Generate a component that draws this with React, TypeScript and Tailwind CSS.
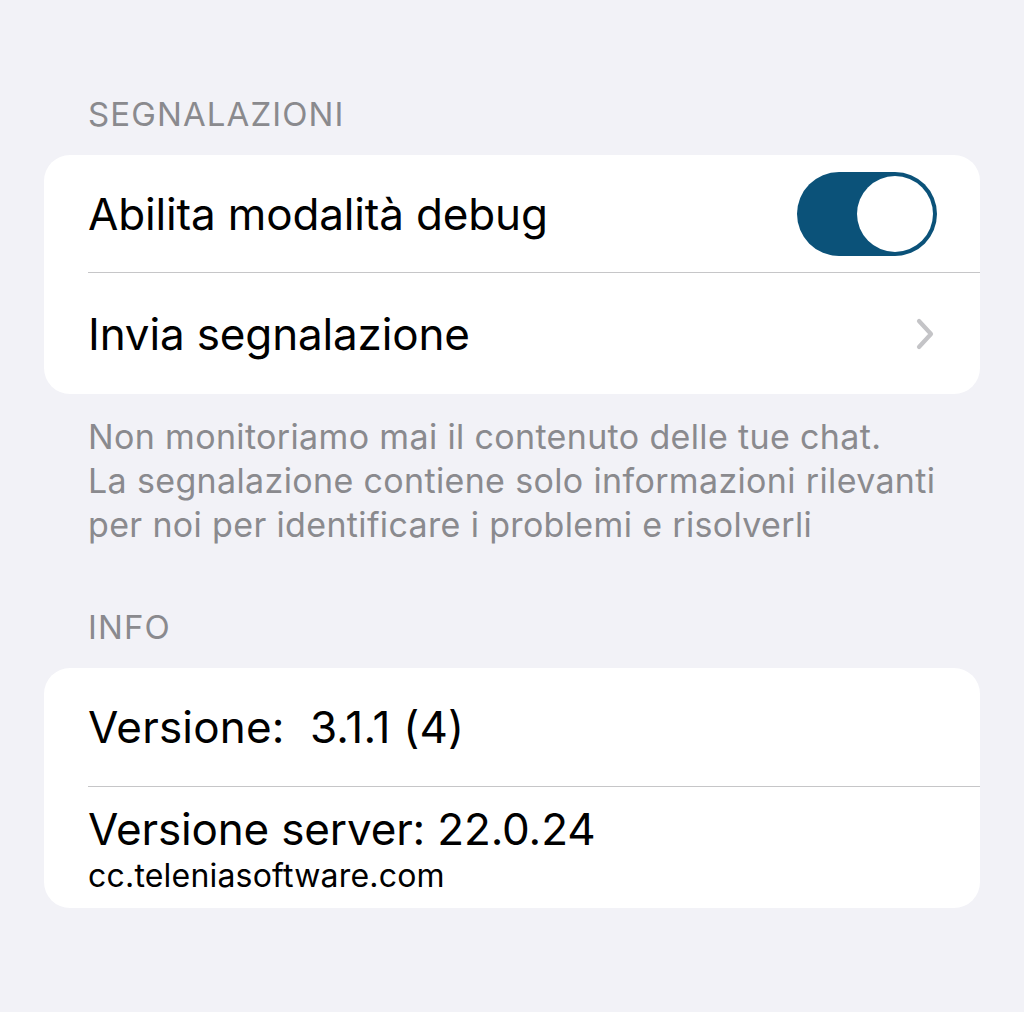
const font = { fontFamily: "Inter, 'Noto Sans', sans-serif" };

function Header({ children }: { children: React.ReactNode }) {
  return (
    <div className="px-[44px] pb-[21px] text-[33px] leading-[40px] tracking-[1.1px] text-[#8a8a8e]">
      {children}
    </div>
  );
}

function Toggle({ on }: { on: boolean }) {
  return (
    <div
      className={`flex h-[84px] w-[140px] items-center rounded-full p-[4px] ${
        on ? "justify-end bg-[#0b5279]" : "justify-start bg-[#e9e9eb]"
      }`}
    >
      <div className="h-[76px] w-[76px] rounded-full bg-white" />
    </div>
  );
}

function Chevron() {
  return (
    <svg width="20" height="34" viewBox="0 0 20 34" fill="none" className="text-[#c4c4c7]">
      <path
        d="M4 4 L16 17 L4 30"
        stroke="currentColor"
        strokeWidth="4.2"
        strokeLinecap="round"
        strokeLinejoin="round"
      />
    </svg>
  );
}

export default function App() {
  return (
    <div
      className="min-h-[1012px] w-full bg-[#f2f2f7] px-[44px] pt-[94px] text-black antialiased"
      style={font}
    >
      <Header>SEGNALAZIONI</Header>

      <div className="overflow-hidden rounded-[26px] bg-white">
        <div className="pl-[44px]">
          <div className="flex h-[118px] items-center justify-between border-b-[1.5px] border-[#c6c6c8] pr-[43px]">
            <span className="text-[44px] leading-none tracking-[-0.15px]">
              Abilita modalità debug
            </span>
            <Toggle on />
          </div>
        </div>
        <div className="flex h-[121px] items-center justify-between pl-[44px] pr-[45px]">
          <span className="text-[44px] leading-none tracking-[-0.15px]">
            Invia segnalazione
          </span>
          <Chevron />
        </div>
      </div>

      <div className="px-[44px] pt-[21px] text-[34px] leading-[44px] tracking-[0.35px] text-[#8a8a8e]">
        <p>Non monitoriamo mai il contenuto delle tue chat.</p>
        <p>La segnalazione contiene solo informazioni rilevanti</p>
        <p>per noi per identificare i problemi e risolverli</p>
      </div>

      <div className="pt-[60px]">
        <Header>INFO</Header>
      </div>

      <div className="overflow-hidden rounded-[26px] bg-white">
        <div className="pl-[44px]">
          <div className="flex h-[119px] items-center border-b-[1.5px] border-[#c6c6c8]">
            <span className="whitespace-pre text-[44px] leading-none tracking-[0.2px]">
              Versione:  3.1.1 (4)
            </span>
          </div>
        </div>
        <div className="flex h-[121px] flex-col justify-center px-[44px] pt-[8px]">
          <span className="text-[44px] leading-[48px] tracking-[-0.15px]">
            Versione server: 22.0.24
          </span>
          <span className="text-[32px] leading-[45px] tracking-[0.2px]">
            cc.teleniasoftware.com
          </span>
        </div>
      </div>
    </div>
  );
}
